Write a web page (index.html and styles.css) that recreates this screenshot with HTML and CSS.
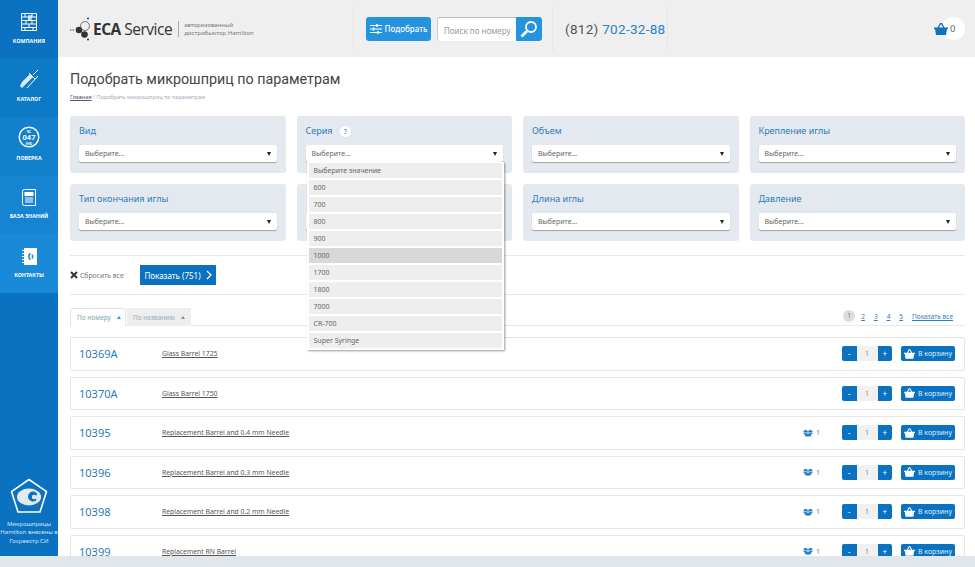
FILE: index.html
```html
<!DOCTYPE html>
<html lang="ru">
<head>
  <meta charset="UTF-8" />
  <title>Подобрать микрошприц по параметрам</title>
  <link rel="stylesheet" href="styles.css">
</head>
<body>
  <div class="app">
    <aside class="sidebar">
      <a class="nav-item nav-1">
        <svg class="nav-icon" viewBox="0 0 16 18" width="16" height="18"><path d="M.5.5h15v17H.5z" fill="none" stroke="#fff"/><path d="M1 4h14M1 7.500h14M1 11h14M1 14.500h14M4 1v3M8 4v4M11 1v3M5 7.500v3.500M11 8v3M8 11v3.500M4 14.500V17M12 14.500V17" stroke="#fff" fill="none"/><path d="M7 2h4v5H7z" fill="#fff" opacity=".6"/></svg>
        <span>Компания</span>
      </a>
      <a class="nav-item nav-2">
        <svg class="nav-icon" viewBox="0 0 20 20" width="20" height="20"><path d="M1 17l2 2 3-3 8-8-3-3-8 8z" fill="#fff" opacity=".85"/><path d="M14 6l5-5M8 19l11-12" stroke="#fff" fill="none"/><path d="M10 4l6 6" stroke="#fff" fill="none"/></svg>
        <span>Каталог</span>
      </a>
      <a class="nav-item nav-3">
        <svg class="nav-icon" viewBox="0 0 22 22" width="22" height="22"><circle cx="11" cy="11" r="9.800" fill="none" stroke="#fff" stroke-width="1.400"/><text x="11" y="13.500" class="verify-num">047</text><text x="11" y="6.500" class="verify-small">ВС</text><text x="11" y="18.500" class="verify-small">ННО</text></svg>
        <span>Поверка</span>
      </a>
      <a class="nav-item nav-4">
        <svg class="nav-icon" viewBox="0 0 14 17" width="14" height="17"><path d="M.5 2.500a2 2 0 012-2h11v16h-11a2 2 0 01-2-2z" fill="none" stroke="#fff"/><path d="M2.500 3h9v4h-9z" fill="#fff"/><path d="M3 9h8M3 11h8M3 13h8" stroke="#fff"/></svg>
        <span>База знаний</span>
      </a>
      <a class="nav-item nav-5">
        <svg class="nav-icon" viewBox="0 0 15 17" width="15" height="17"><path d="M2 0h13v17H2z" fill="#fff"/><path d="M0 2.500h3M0 5.500h3M0 8.500h3M0 11.500h3M0 14.500h3" stroke="#fff"/><path d="M8.500 5.500a3.500 3.500 0 000 6" fill="none" stroke="#1a87d6" stroke-width="1.500"/><path d="M10.500 6.500v4" stroke="#1a87d6" stroke-width="1.500"/></svg>
        <span>Контакты</span>
      </a>
      <div class="gost">
        <svg viewBox="0 0 38 36" width="38" height="36"><path d="M19 1.500L36.500 13.500 30 34H8L1.500 13.500z" fill="none" stroke="#fff" stroke-width="1.600"/><ellipse cx="19" cy="19" rx="12" ry="8.500" fill="#e4e9ee"/><path d="M27 15.500a5 5 0 10-1 7z" fill="#0a72c0"/><circle cx="24" cy="19" r="2.200" fill="#e4e9ee"/><path d="M24 17.500h7v3h-7z" fill="#e4e9ee"/></svg>
        <p>Микрошприцы Hamilton внесены в Госреестр СИ</p>
      </div>
    </aside>

    <div class="page">
      <header class="topbar">
        <div class="logo">
          <svg class="logo-mark" viewBox="0 0 22 24" width="22" height="24"><path d="M0 13h5" stroke="#444" stroke-dasharray="1.500 1" fill="none"/><circle cx="9" cy="13" r="3.300" fill="#333"/><circle cx="14.500" cy="17.500" r="3.300" fill="#333"/><circle cx="15" cy="9" r="4.500" fill="none" stroke="#555" stroke-width=".8"/><circle cx="18" cy="1.500" r="1" fill="#333"/><circle cx="18" cy="22.500" r="1" fill="#333"/></svg>
          <span class="logo-name"><b>ECA</b> Service</span>
          <span class="logo-note">авторизованный<br>дистрибьютор Hamilton</span>
        </div>
        <div class="search-cell">
          <button class="pick-btn">
            <svg viewBox="0 0 12 10" width="12" height="10"><path d="M0 1.500h12M0 5h12M0 8.500h12" stroke="#fff"/><path d="M7 0v3M3.500 3.500v3M8 7v3" stroke="#fff" stroke-width="1.500"/></svg>
            Подобрать
          </button>
          <div class="search">
            <span class="search-input">Поиск по номеру</span>
            <span class="search-go">
              <svg viewBox="0 0 18 18" width="18" height="18"><circle cx="11" cy="7" r="5" fill="none" stroke="#fff" stroke-width="1.800"/><path d="M7 11L1.500 16.500" stroke="#fff" stroke-width="2.600"/></svg>
            </span>
          </div>
        </div>
        <div class="phone">(812) <span>702-32-88</span></div>
        <div class="cart">
          <svg viewBox="0 0 14 12" width="14" height="12"><path d="M0 4.500h14v1.500h-1l-1 6H2L1 6H0z" fill="#0a72c0"/><path d="M4 5l2.500-4.500h1L10 5" fill="none" stroke="#0a72c0" stroke-width="1.300"/></svg>
          <span class="cart-count">0</span>
        </div>
      </header>

      <main class="content">
        <h1>Подобрать микрошприц по параметрам</h1>
        <div class="crumbs"><a>Главная</a> / Подобрать микрошприц по параметрам</div>

        <section class="filters">
          <div class="filter"><label>Вид</label><div class="select">Выберите...</div></div>
          <div class="filter">
            <label>Серия <i class="hint">?</i></label>
            <div class="select">Выберите...</div>
            <ul class="dropdown">
              <li>Выберите значение</li>
              <li>600</li>
              <li>700</li>
              <li>800</li>
              <li>900</li>
              <li class="hover">1000</li>
              <li>1700</li>
              <li>1800</li>
              <li>7000</li>
              <li>CR-700</li>
              <li>Super Syringe</li>
            </ul>
          </div>
          <div class="filter"><label>Объем</label><div class="select">Выберите...</div></div>
          <div class="filter"><label>Крепление иглы</label><div class="select">Выберите...</div></div>
          <div class="filter"><label>Тип окончания иглы</label><div class="select">Выберите...</div></div>
          <!-- this one sits under the open list -->
          <div class="filter"><label></label><div class="select"></div></div>
          <div class="filter"><label>Длина иглы</label><div class="select">Выберите...</div></div>
          <div class="filter"><label>Давление</label><div class="select">Выберите...</div></div>
        </section>

        <div class="actions">
          <a class="reset"><svg viewBox="0 0 8 8" width="8" height="8"><path d="M1 1l6 6M7 1L1 7" stroke="#333" stroke-width="2"/></svg>Сбросить все</a>
          <button class="show-btn">Показать (751)
            <svg viewBox="0 0 6 10" width="6" height="10"><path d="M1 1l4 4-4 4" fill="none" stroke="#fff" stroke-width="1.200"/></svg>
          </button>
        </div>

        <div class="sortbar">
          <div class="tabs">
            <a class="tab active">По номеру <i class="up"></i></a>
            <a class="tab">По названию <i class="up"></i></a>
          </div>
          <div class="pager">
            <a class="current">1</a><a>2</a><a>3</a><a>4</a><a>5</a><a class="all">Показать все</a>
          </div>
        </div>

        <div class="rows">
          <div class="row">
            <a class="num">10369A</a><a class="name">Glass Barrel 1725</a>
            <div class="qty"><b>-</b><span>1</span><b>+</b></div>
            <button class="buy"><svg viewBox="0 0 14 12" width="11" height="10"><path d="M0 4.500h14v1.500h-1l-1 6H2L1 6H0z" fill="#fff"/><path d="M4 5l2.500-4.500h1L10 5" fill="none" stroke="#fff" stroke-width="1.300"/></svg>В корзину</button>
          </div>
          <div class="row">
            <a class="num">10370A</a><a class="name">Glass Barrel 1750</a>
            <div class="qty"><b>-</b><span>1</span><b>+</b></div>
            <button class="buy"><svg viewBox="0 0 14 12" width="11" height="10"><path d="M0 4.500h14v1.500h-1l-1 6H2L1 6H0z" fill="#fff"/><path d="M4 5l2.500-4.500h1L10 5" fill="none" stroke="#fff" stroke-width="1.300"/></svg>В корзину</button>
          </div>
          <div class="row">
            <a class="num">10395</a><a class="name">Replacement Barrel and 0.4 mm Needle</a>
            <div class="stock"><svg viewBox="0 0 12 9" width="10" height="8"><path d="M0 2.500L3 .5l3 1.500 3-1.500 3 2-2 1.200 2 1.300-2 .8V8L6 9 2 8V5.800L0 5l2-1.300z" fill="#2a80c4"/><path d="M6 2.500v2.500M2.500 3.700L6 5l3.500-1.300" stroke="#fff" stroke-width=".8" fill="none"/></svg>1</div>
            <div class="qty"><b>-</b><span>1</span><b>+</b></div>
            <button class="buy"><svg viewBox="0 0 14 12" width="11" height="10"><path d="M0 4.500h14v1.500h-1l-1 6H2L1 6H0z" fill="#fff"/><path d="M4 5l2.500-4.500h1L10 5" fill="none" stroke="#fff" stroke-width="1.300"/></svg>В корзину</button>
          </div>
          <div class="row">
            <a class="num">10396</a><a class="name">Replacement Barrel and 0.3 mm Needle</a>
            <div class="stock"><svg viewBox="0 0 12 9" width="10" height="8"><path d="M0 2.500L3 .5l3 1.500 3-1.500 3 2-2 1.200 2 1.300-2 .8V8L6 9 2 8V5.800L0 5l2-1.300z" fill="#2a80c4"/><path d="M6 2.500v2.500M2.500 3.700L6 5l3.500-1.300" stroke="#fff" stroke-width=".8" fill="none"/></svg>1</div>
            <div class="qty"><b>-</b><span>1</span><b>+</b></div>
            <button class="buy"><svg viewBox="0 0 14 12" width="11" height="10"><path d="M0 4.500h14v1.500h-1l-1 6H2L1 6H0z" fill="#fff"/><path d="M4 5l2.500-4.500h1L10 5" fill="none" stroke="#fff" stroke-width="1.300"/></svg>В корзину</button>
          </div>
          <div class="row">
            <a class="num">10398</a><a class="name">Replacement Barrel and 0.2 mm Needle</a>
            <div class="stock"><svg viewBox="0 0 12 9" width="10" height="8"><path d="M0 2.500L3 .5l3 1.500 3-1.500 3 2-2 1.200 2 1.300-2 .8V8L6 9 2 8V5.800L0 5l2-1.300z" fill="#2a80c4"/><path d="M6 2.500v2.500M2.500 3.700L6 5l3.500-1.300" stroke="#fff" stroke-width=".8" fill="none"/></svg>1</div>
            <div class="qty"><b>-</b><span>1</span><b>+</b></div>
            <button class="buy"><svg viewBox="0 0 14 12" width="11" height="10"><path d="M0 4.500h14v1.500h-1l-1 6H2L1 6H0z" fill="#fff"/><path d="M4 5l2.500-4.500h1L10 5" fill="none" stroke="#fff" stroke-width="1.300"/></svg>В корзину</button>
          </div>
          <div class="row">
            <a class="num">10399</a><a class="name">Replacement RN Barrel</a>
            <div class="stock"><svg viewBox="0 0 12 9" width="10" height="8"><path d="M0 2.500L3 .5l3 1.500 3-1.500 3 2-2 1.200 2 1.300-2 .8V8L6 9 2 8V5.800L0 5l2-1.300z" fill="#2a80c4"/><path d="M6 2.500v2.500M2.500 3.700L6 5l3.500-1.300" stroke="#fff" stroke-width=".8" fill="none"/></svg>1</div>
            <div class="qty"><b>-</b><span>1</span><b>+</b></div>
            <button class="buy"><svg viewBox="0 0 14 12" width="11" height="10"><path d="M0 4.500h14v1.500h-1l-1 6H2L1 6H0z" fill="#fff"/><path d="M4 5l2.500-4.500h1L10 5" fill="none" stroke="#fff" stroke-width="1.300"/></svg>В корзину</button>
          </div>
        </div>
      </main>
    </div>
  </div>
  <div class="scrollbar"></div>
</body>
</html>
```

FILE: styles.css
```css
* {
  box-sizing: border-box;
}

html, body {
  height: 100%;
}

body {
  margin: 0;
  display: flex;
  flex-direction: column;
  overflow: hidden;
  background: #fff;
  color: #555;
  font-family: "Noto Sans", Arial, sans-serif;
}

button {
  font-family: inherit;
  border: 0;
}

.app {
  flex: 1;
  display: flex;
  min-height: 0;
  overflow: hidden;
}

.scrollbar {
  height: 11px;
  flex: none;
  background: #e1e6ea;
}

/* left column */
.sidebar {
  width: 58px;
  flex: none;
  display: flex;
  flex-direction: column;
  background: #0a72c0;
  color: #fff;
}

.nav-item {
  display: flex;
  flex-direction: column;
  align-items: center;
  justify-content: flex-end;
  height: 58.500px;
  padding-bottom: 14px;
  gap: 6px;
  font-size: 5.300px;
  font-weight: 700;
  text-transform: uppercase;
  white-space: nowrap;
}

.nav-1 { background: #0a72c0; }
.nav-2 { background: #0d7ac6; }
.nav-3 { background: #1280cc; }
.nav-4 { background: #1684d0; }
.nav-5 { background: #1a8ad8; }

.verify-num {
  font-size: 7.500px;
  fill: #fff;
  text-anchor: middle;
  font-family: "Roboto", sans-serif;
}

.verify-small {
  font-size: 3px;
  font-weight: 700;
  fill: #fff;
  text-anchor: middle;
  font-family: "Roboto", sans-serif;
}

.gost {
  margin-top: auto;
  padding-bottom: 11px;
  display: flex;
  flex-direction: column;
  align-items: center;
  gap: 6px;
}

.gost p {
  margin: 0;
  font-size: 6px;
  line-height: 8.500px;
  text-align: center;
  color: #d5e7f5;
}

/* header */
.page {
  flex: 1;
  min-width: 0;
  display: flex;
  flex-direction: column;
}

.topbar {
  height: 57px;
  flex: none;
  display: flex;
  align-items: center;
  background: #efefef;
}

.logo {
  width: 295px;
  padding-left: 12px;
  display: flex;
  align-items: center;
}

.logo-name {
  margin-left: 1px;
  color: #333;
  font-family: "Open Sans", sans-serif;
  font-size: 15.500px;
  letter-spacing: -.5px;
  white-space: nowrap;
}

.logo-note {
  margin-left: 6px;
  padding-left: 5px;
  border-left: 1px solid #aaa;
  font-size: 6px;
  line-height: 8px;
  color: #777;
  white-space: nowrap;
}

.search-cell {
  width: 200px;
  height: 44px;
  padding-left: 12px;
  display: flex;
  align-items: center;
  gap: 6px;
  border-left: 1px solid #e6e6e6;
  border-right: 1px solid #e6e6e6;
}

.pick-btn {
  width: 65px;
  height: 24px;
  padding: 0;
  display: flex;
  align-items: center;
  justify-content: center;
  gap: 3px;
  border-radius: 3px;
  background: #2593de;
  color: #fff;
  font-size: 8px;
  font-weight: 500;
}

.search {
  display: flex;
  height: 24px;
}

.search-input {
  width: 79px;
  padding-left: 6px;
  line-height: 25px;
  font-size: 8px;
  background: #fff;
  color: #999;
  border-top: 1px solid #bbb;
  border-left: 1px solid #ccc;
  border-radius: 3px 0 0 3px;
  white-space: nowrap;
}

.search-go {
  width: 26px;
  display: flex;
  align-items: center;
  justify-content: center;
  background: #2593de;
  border-radius: 0 3px 3px 0;
}

.phone {
  width: 115px;
  padding-left: 12px;
  height: 44px;
  line-height: 44px;
  font-family: "Roboto", sans-serif;
  font-size: 13.500px;
  letter-spacing: .3px;
  color: #555;
  border-right: 1px solid #e6e6e6;
  white-space: nowrap;
}

.phone span {
  color: #2a80c4;
}

.cart {
  margin-left: auto;
  padding-right: 10px;
  display: flex;
  align-items: center;
}

.cart svg {
  position: relative;
  z-index: 1;
}

.cart-count {
  width: 23px;
  height: 23px;
  margin-left: -6px;
  padding-left: 8px;
  line-height: 23px;
  border-radius: 50%;
  background: #fff;
  font-size: 9.500px;
  color: #666;
}

/* content */
.content {
  flex: 1;
  min-height: 0;
  padding: 12px 10px 0 12px;
  overflow: hidden;
}

h1 {
  margin: 0;
  font-family: "Roboto", sans-serif;
  font-size: 14.300px;
  line-height: 21px;
  font-weight: 400;
  color: #444;
  white-space: nowrap;
}

.crumbs {
  margin-top: 3px;
  font-size: 5.500px;
  line-height: 8px;
  color: #aab;
}

.crumbs a {
  color: #557;
  text-decoration: underline;
}

.filters {
  margin-top: 15px;
  display: grid;
  grid-template-columns: repeat(4, 1fr);
  gap: 11px;
  padding-bottom: 14px;
  border-bottom: 1px solid #e8e8e8;
}

.filter {
  position: relative;
  height: 57px;
  padding: 8px 9px 0;
  background: #e4e9f0;
  border-radius: 3px;
}

.filter label {
  display: block;
  height: 14px;
  line-height: 14px;
  font-size: 9px;
  color: #2a7cbc;
  white-space: nowrap;
}

.hint {
  display: inline-block;
  width: 11px;
  height: 11px;
  margin-left: 5px;
  line-height: 11px;
  border-radius: 50%;
  background: #fff;
  font-size: 7px;
  font-style: normal;
  text-align: center;
}

.select {
  position: relative;
  height: 17px;
  margin-top: 7px;
  padding-left: 6px;
  line-height: 17px;
  background: #fff;
  border-radius: 2px;
  box-shadow: 0 1px 1px rgba(0, 0, 0, .3);
  font-size: 7px;
  color: #666;
}

.select::after {
  content: "";
  position: absolute;
  right: 6px;
  top: 7px;
  border: 2.500px solid transparent;
  border-top: 4px solid #222;
  border-bottom: 0;
}

.dropdown {
  position: absolute;
  z-index: 5;
  top: 46px;
  left: 10px;
  width: 197px;
  margin: 0;
  padding: 1px 2px 2px;
  list-style: none;
  background: #fff;
  box-shadow: 1px 1px 2px rgba(0, 0, 0, .4);
}

.dropdown li {
  height: 15px;
  margin-bottom: 2px;
  padding-left: 5px;
  line-height: 15px;
  background: #eee;
  font-size: 7px;
  color: #666;
}

.dropdown li:last-child {
  margin-bottom: 0;
}

.dropdown li.hover {
  background: #d8d8d8;
}

.actions {
  display: flex;
  align-items: center;
  height: 39px;
  border-bottom: 1px solid #e8e8e8;
}

.reset {
  width: 70px;
  display: flex;
  align-items: center;
  gap: 2px;
  font-size: 6.800px;
  color: #777;
  white-space: nowrap;
}

.show-btn {
  width: 76px;
  height: 20px;
  padding: 0;
  display: flex;
  align-items: center;
  justify-content: center;
  gap: 5px;
  background: #0a72c0;
  color: #fff;
  font-size: 8px;
}

.sortbar {
  margin-top: 13px;
  display: flex;
  justify-content: space-between;
  align-items: flex-end;
  height: 18px;
  border-bottom: 1px solid #e8e8e8;
}

.tabs {
  display: flex;
  gap: 1px;
}

.tab {
  height: 18px;
  margin-bottom: -1px;
  padding: 0 6px;
  display: flex;
  align-items: center;
  gap: 6px;
  background: #eee;
  font-size: 6.500px;
  color: #9ab;
  white-space: nowrap;
}

.tab.active {
  width: 56px;
  background: #fff;
  border: 1px solid #e4e4e4;
  border-bottom: 0;
  border-radius: 3px 3px 0 0;
  color: #7aa;
}

.up {
  border: 2px solid transparent;
  border-bottom: 3px solid #889;
  border-top: 0;
}

.tab.active .up {
  border-bottom-color: #2593de;
}

.pager {
  display: flex;
  align-items: center;
  gap: 9px;
  padding: 0 12px 3px 0;
  font-size: 6.500px;
  color: #2a80c4;
}

.pager a {
  text-decoration: underline;
}

.pager .current {
  width: 12px;
  height: 12px;
  margin-right: -3px;
  line-height: 12px;
  border-radius: 50%;
  background: #ddd;
  color: #777;
  text-align: center;
  text-decoration: none;
}

.rows {
  margin-top: 11px;
  display: flex;
  flex-direction: column;
  gap: 6px;
}

.row {
  flex: none;
  height: 33.500px;
  display: flex;
  align-items: center;
  padding: 0 9px 0 8px;
  background: #fff;
  border: 1px solid #e6e6e6;
  border-radius: 2px;
}

.num {
  width: 83px;
  font-size: 11px;
  color: #2a7cbc;
}

.name {
  font-size: 6.800px;
  color: #555;
  text-decoration: underline;
  white-space: nowrap;
}

.stock {
  margin-left: auto;
  display: flex;
  align-items: center;
  gap: 3px;
  font-size: 7px;
  color: #777;
}

.qty {
  margin-left: 22px;
  display: flex;
  width: 50px;
  height: 15px;
  border-radius: 2px;
  overflow: hidden;
  background: #0a72c0;
  color: #fff;
  font-size: 8px;
  line-height: 15px;
  text-align: center;
}

.name + .qty {
  margin-left: auto;
}

.qty b {
  flex: 1;
  font-weight: 400;
}

.qty span {
  width: 21px;
  background: #f1f1f1;
  color: #888;
  font-size: 7px;
}

.buy {
  width: 54px;
  height: 15px;
  margin-left: 9px;
  padding: 0;
  display: flex;
  align-items: center;
  justify-content: center;
  gap: 3px;
  border-radius: 2px;
  background: #0a72c0;
  color: #dfeefa;
  font-size: 7px;
}
```
